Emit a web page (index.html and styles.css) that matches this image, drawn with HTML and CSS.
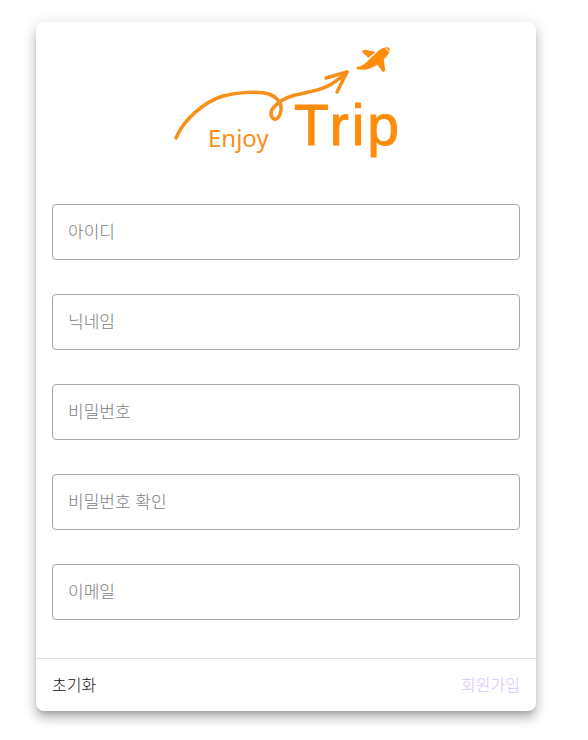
FILE: index.html
```html
<!DOCTYPE html>
<html lang="ko">
<head>
<meta charset="utf-8">
<meta name="viewport" content="width=device-width, initial-scale=1">
<title>Enjoy Trip</title>
<link rel="stylesheet" href="styles.css">
</head>
<body>
<main class="page">
  <form class="card">
    <header class="brand">
      <svg class="logo" viewBox="165 35 242 130" role="img" aria-label="Enjoy Trip">
        <g class="trail">
          <path d="M176 138C184 119 204 102 223 96C238 92 258 91 269 94C277 97 282 103 281 110C280 117 277 120 274 119C270 117 270 111 274 107C280 100 288 97 295 95C309 92 323 90 333 83Q341 78 347 72"/>
          <path d="M326 78L347 72L337 92"/>
        </g>
        <g class="plane" transform="translate(285 35) scale(.3333)">
          <path d="M214 97Q235 93 252 74L282 46Q297 34 313 38Q318 48 304 66L275 90Q250 108 217 103Z"/>
          <path d="M231 48L240 44L272 51L250 68L234 54Z"/>
          <path d="M296 71L301 107L294 112L276 88Z"/>
          <path class="window" d="M302 41Q310 42 311 50"/>
        </g>
        <text class="word-enjoy" x="208" y="147">Enjoy</text>
        <text class="word-trip" x="294" y="145">Trip</text>
      </svg>
    </header>
    <div class="fields">
      <div class="field"><input id="user-id" type="text" placeholder=" "><label for="user-id">아이디</label></div>
      <div class="field"><input id="nickname" type="text" placeholder=" "><label for="nickname">닉네임</label></div>
      <div class="field"><input id="password" type="password" placeholder=" "><label for="password">비밀번호</label></div>
      <div class="field"><input id="password-check" type="password" placeholder=" "><label for="password-check">비밀번호 확인</label></div>
      <div class="field"><input id="email" type="email" placeholder=" "><label for="email">이메일</label></div>
    </div>
    <footer class="actions">
      <button class="btn" type="reset">초기화</button>
      <button class="btn btn-join" type="submit">회원가입</button>
    </footer>
  </form>
</main>
</body>
</html>
```
FILE: styles.css
```css
* {
  box-sizing: border-box;
}

body {
  margin: 0;
  background: #fff;
  font-family: "Noto Sans CJK KR", "Noto Sans", sans-serif;
  font-weight: 300;
}

.page {
  padding: 22px 52px 28px 36px;
}

.card {
  max-width: 500px;
  border-radius: 8px;
  background: #fff;
  box-shadow:
    0 5px 5px -3px rgba(0, 0, 0, .2),
    0 8px 10px 1px rgba(0, 0, 0, .14),
    0 3px 14px 2px rgba(0, 0, 0, .12);
}

.brand {
  display: flex;
  justify-content: center;
  padding: 13px 16px 39px;
}

.logo {
  width: 242px;
  max-width: 100%;
}

.trail {
  fill: none;
  stroke: #f7901a;
  stroke-width: 3.5;
  stroke-linecap: round;
  stroke-linejoin: round;
}

.plane {
  fill: #ff8c0a;
}

.window {
  fill: none;
  stroke: #fff;
  stroke-width: 3;
}

.word-enjoy {
  fill: #f7901a;
  font: 400 24px "Noto Sans", sans-serif;
}

.word-trip {
  fill: #ff8c0a;
  stroke: #ff8c0a;
  stroke-width: 1;
  font: 400 57px "Liberation Sans", sans-serif;
  letter-spacing: 3px;
}

.fields {
  display: grid;
  gap: 34px;
  padding: 0 16px 38px;
}

.field {
  display: grid;
}

.field input,
.field label {
  grid-area: 1 / 1;
}

.field input {
  width: 100%;
  height: 56px;
  padding: 0 16px;
  border: 1px solid #a6a6a6;
  border-radius: 4px;
  background: none;
  color: #212121;
  font: inherit;
  font-size: 17px;
}

.field label {
  align-self: center;
  padding: 0 16px 2px;
  color: #7d7d7d;
  font-size: 17px;
  line-height: 24px;
  pointer-events: none;
}

.field input:not(:placeholder-shown) + label {
  visibility: hidden;
}

.actions {
  display: flex;
  align-items: center;
  justify-content: space-between;
  padding: 8px 16px;
  border-top: 1px solid #e0e0e0;
}

.btn {
  height: 36px;
  padding: 0 0 2px;
  border: 0;
  background: none;
  color: #111;
  font: inherit;
  font-size: 16px;
}

.btn-join {
  color: #d9c2f7;
}
```
